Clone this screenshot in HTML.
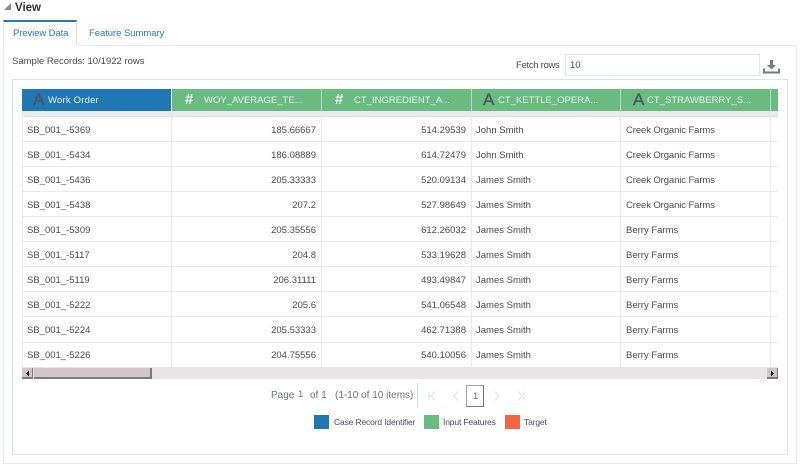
<!DOCTYPE html>
<html><head><meta charset="utf-8">
<style>
html,body{margin:0;padding:0;background:#fff;}
body{width:800px;height:466px;overflow:hidden;position:relative;font-family:"Liberation Sans",sans-serif;font-size:9.5px;color:#4a4a4a;}
.a{position:absolute;white-space:nowrap;}
.l{position:absolute;}
.c{position:absolute;white-space:nowrap;line-height:12px;}
.h{position:absolute;white-space:nowrap;color:#e6f5ea;line-height:12px;top:95px;}
.ic{position:absolute;line-height:16px;top:92px;font-size:17px;-webkit-text-stroke:.3px currentColor;}
.hs{position:absolute;line-height:16px;top:92px;font-size:15px;font-weight:bold;color:#f2f8f3;}
.sb{position:absolute;background:#d3c5ca;border-right:1px solid #777;border-bottom:2px solid #80787a;box-sizing:border-box;}
.lg{position:absolute;white-space:nowrap;top:416px;line-height:12px;font-size:8.5px;letter-spacing:-.15px;color:#4a4a55;}
</style></head><body>
<svg class="a" style="left:3px;top:2px" width="10" height="10"><path d="M1 8 L8 1 L8 8Z" fill="#8a8a8a"/></svg>
<div class="a" style="left:15px;top:1px;font-weight:bold;font-size:11.5px;line-height:14px;color:#333">View</div>

<div class="l" style="left:3px;top:20px;width:74px;height:25px;border-top:2px solid #2a7ab5;border-right:1px solid #d5dce6;border-left:1px solid #e3e7ee;box-sizing:border-box"></div>
<div class="a" style="left:13px;top:28px;color:#2a7ab5;line-height:12px;letter-spacing:-.1px">Preview Data</div>
<div class="a" style="left:89px;top:28px;color:#2a7ab5;line-height:12px;letter-spacing:-.05px">Feature Summary</div>

<div class="l" style="left:77px;top:45px;width:720px;height:1px;background:#e8eaee"></div>
<div class="l" style="left:3px;top:45px;width:794px;height:419px;border:1px solid #e8eaee;border-top:0;box-sizing:border-box"></div>

<div class="a" style="left:12px;top:56px;line-height:12px">Sample Records: 10/1922 rows</div>
<div class="a" style="left:516px;top:60px;line-height:12px;letter-spacing:-.3px">Fetch rows</div>
<div class="l" style="left:565px;top:54px;width:195px;height:22px;border:1px solid #e2e5ea;box-sizing:border-box"></div>
<div class="a" style="left:570px;top:60px;line-height:12px">10</div>
<svg class="a" style="left:762px;top:57px" width="20" height="19"><path d="M8 3h3v5h3l-4.500 4.500L5 8h3z" fill="#77797c"/><path d="M1 11.500v5h17v-5h-2v3H3v-3z" fill="#77797c"/></svg>

<div class="l" style="left:12px;top:79px;width:776px;height:376px;border:1px solid #dde2ea;border-left:1px solid #d3dbe7;box-sizing:border-box"></div>

<div class="l" style="left:22px;top:89px;width:149px;height:22px;background:#1f77b4"></div>
<div class="l" style="left:172px;top:89px;width:606px;height:22px;background:#69bb80"></div>
<div class="l" style="left:321px;top:89px;width:1px;height:22px;background:#b4ddc0"></div>
<div class="l" style="left:471px;top:89px;width:1px;height:22px;background:#b4ddc0"></div>
<div class="l" style="left:620px;top:89px;width:1px;height:22px;background:#b4ddc0"></div>
<div class="l" style="left:770px;top:89px;width:1px;height:22px;background:#b4ddc0"></div>
<div class="l" style="left:22px;top:111px;width:756px;height:5px;background:#e9ebee"></div>
<div class="l" style="left:22px;top:116px;width:756px;height:1px;background:#dfe3ea"></div>

<div class="ic" style="left:33px;color:#4d5560">A</div>
<div class="h" style="left:48px;letter-spacing:.2px">Work Order</div>
<div class="hs" style="left:185px">#</div>
<div class="h" style="left:204px">WOY_AVERAGE_TE...</div>
<div class="hs" style="left:335px">#</div>
<div class="h" style="left:354px">CT_INGREDIENT_A...</div>
<div class="ic" style="left:483px;color:#4d5560">A</div>
<div class="h" style="left:498px">CT_KETTLE_OPERA...</div>
<div class="ic" style="left:633px;color:#4d5560">A</div>
<div class="h" style="left:647px">CT_STRAWBERRY_S...</div>

<div class="l" style="left:22px;top:117px;width:1px;height:250px;background:#e8eaee"></div>
<div class="l" style="left:171px;top:117px;width:1px;height:250px;background:#e8eaee"></div>
<div class="l" style="left:321px;top:117px;width:1px;height:250px;background:#e8eaee"></div>
<div class="l" style="left:471px;top:117px;width:1px;height:250px;background:#e8eaee"></div>
<div class="l" style="left:620px;top:117px;width:1px;height:250px;background:#e8eaee"></div>
<div class="l" style="left:770px;top:117px;width:1px;height:250px;background:#e8eaee"></div>
<div class="l" style="left:22px;top:141px;width:756px;height:1px;background:#e8eaee"></div>
<div class="l" style="left:22px;top:166px;width:756px;height:1px;background:#e8eaee"></div>
<div class="l" style="left:22px;top:191px;width:756px;height:1px;background:#e8eaee"></div>
<div class="l" style="left:22px;top:216px;width:756px;height:1px;background:#e8eaee"></div>
<div class="l" style="left:22px;top:241px;width:756px;height:1px;background:#e8eaee"></div>
<div class="l" style="left:22px;top:266px;width:756px;height:1px;background:#e8eaee"></div>
<div class="l" style="left:22px;top:291px;width:756px;height:1px;background:#e8eaee"></div>
<div class="l" style="left:22px;top:316px;width:756px;height:1px;background:#e8eaee"></div>
<div class="l" style="left:22px;top:342px;width:756px;height:1px;background:#e8eaee"></div>

<div class="c" style="left:27px;top:125px">SB_001_-5369</div><div class="c" style="right:484px;top:125px">185.66667</div><div class="c" style="right:334px;top:125px">514.29539</div><div class="c" style="left:476px;top:125px">John Smith</div><div class="c" style="left:626px;top:125px;letter-spacing:-.1px">Creek Organic Farms</div>
<div class="c" style="left:27px;top:150px">SB_001_-5434</div><div class="c" style="right:484px;top:150px">186.08889</div><div class="c" style="right:334px;top:150px">614.72479</div><div class="c" style="left:476px;top:150px">John Smith</div><div class="c" style="left:626px;top:150px;letter-spacing:-.1px">Creek Organic Farms</div>
<div class="c" style="left:27px;top:175px">SB_001_-5436</div><div class="c" style="right:484px;top:175px">205.33333</div><div class="c" style="right:334px;top:175px">520.09134</div><div class="c" style="left:476px;top:175px">James Smith</div><div class="c" style="left:626px;top:175px;letter-spacing:-.1px">Creek Organic Farms</div>
<div class="c" style="left:27px;top:200px">SB_001_-5438</div><div class="c" style="right:484px;top:200px">207.2</div><div class="c" style="right:334px;top:200px">527.98649</div><div class="c" style="left:476px;top:200px">James Smith</div><div class="c" style="left:626px;top:200px;letter-spacing:-.1px">Creek Organic Farms</div>
<div class="c" style="left:27px;top:225px">SB_001_-5309</div><div class="c" style="right:484px;top:225px">205.35556</div><div class="c" style="right:334px;top:225px">612.26032</div><div class="c" style="left:476px;top:225px">James Smith</div><div class="c" style="left:626px;top:225px">Berry Farms</div>
<div class="c" style="left:27px;top:250px">SB_001_-5117</div><div class="c" style="right:484px;top:250px">204.8</div><div class="c" style="right:334px;top:250px">533.19628</div><div class="c" style="left:476px;top:250px">James Smith</div><div class="c" style="left:626px;top:250px">Berry Farms</div>
<div class="c" style="left:27px;top:275px">SB_001_-5119</div><div class="c" style="right:484px;top:275px">206.31111</div><div class="c" style="right:334px;top:275px">493.49847</div><div class="c" style="left:476px;top:275px">James Smith</div><div class="c" style="left:626px;top:275px">Berry Farms</div>
<div class="c" style="left:27px;top:300px">SB_001_-5222</div><div class="c" style="right:484px;top:300px">205.6</div><div class="c" style="right:334px;top:300px">541.06548</div><div class="c" style="left:476px;top:300px">James Smith</div><div class="c" style="left:626px;top:300px">Berry Farms</div>
<div class="c" style="left:27px;top:325px">SB_001_-5224</div><div class="c" style="right:484px;top:325px">205.53333</div><div class="c" style="right:334px;top:325px">462.71388</div><div class="c" style="left:476px;top:325px">James Smith</div><div class="c" style="left:626px;top:325px">Berry Farms</div>
<div class="c" style="left:27px;top:350px">SB_001_-5226</div><div class="c" style="right:484px;top:350px">204.75556</div><div class="c" style="right:334px;top:350px">540.10056</div><div class="c" style="left:476px;top:350px">James Smith</div><div class="c" style="left:626px;top:350px">Berry Farms</div>

<div class="l" style="left:22px;top:367px;width:756px;height:12px;background:#e9e4e6"></div>
<div class="sb" style="left:22px;top:368px;width:11px;height:11px"></div>
<svg class="a" style="left:25px;top:370px" width="6" height="7"><path d="M4 0.500v6L1 3.500z" fill="#111"/></svg>
<div class="l" style="left:34px;top:368px;width:118px;height:11px;background:#d3c5ca;border-right:2px solid #80787a;border-bottom:2px solid #80787a;box-sizing:border-box"></div>
<div class="sb" style="left:767px;top:368px;width:11px;height:11px"></div>
<svg class="a" style="left:770px;top:370px" width="6" height="7"><path d="M1 0.500v6l3-3z" fill="#111"/></svg>

<div class="a" style="left:271px;top:390px;line-height:12px;color:#6f7378;font-size:10px">Page</div>
<div class="a" style="left:298px;top:389px;line-height:12px;color:#6f7378">1</div>
<div class="a" style="left:310px;top:390px;line-height:12px;color:#6f7378;font-size:10px">of 1</div>
<div class="a" style="left:335px;top:390px;line-height:12px;color:#6f7378;font-size:10px">(1-10 of 10 items)</div>
<div class="l" style="left:417px;top:383px;width:1px;height:24px;background:#d5dce6"></div>
<svg class="a" style="left:425px;top:389px" width="100" height="14" fill="none" stroke="#e0e3e7" stroke-width="1.300">
<path d="M4 2.500v9M10 2.500L6 7l4 4.500"/>
<path d="M33 2.500L29 7l4 4.500"/>
<path d="M70 2.500L74 7l-4 4.500"/>
<path d="M93 2.500l4 4.500-4 4.500M99 2.500v9"/>
</svg>
<div class="l" style="left:466px;top:385px;width:18px;height:22px;border:1px solid #a8a4a4;border-right-color:#777;border-bottom-color:#777;box-sizing:border-box"></div>
<div class="a" style="left:473px;top:391px;line-height:12px;color:#7a6a50">1</div>

<div class="l" style="left:314px;top:415px;width:15px;height:14px;background:#1f77b4"></div>
<div class="lg" style="left:334px">Case Record Identifier</div>
<div class="l" style="left:424px;top:415px;width:15px;height:14px;background:#69bb80"></div>
<div class="lg" style="left:443px">Input Features</div>
<div class="l" style="left:505px;top:415px;width:15px;height:14px;background:#f26641"></div>
<div class="lg" style="left:524px">Target</div>
</body></html>
